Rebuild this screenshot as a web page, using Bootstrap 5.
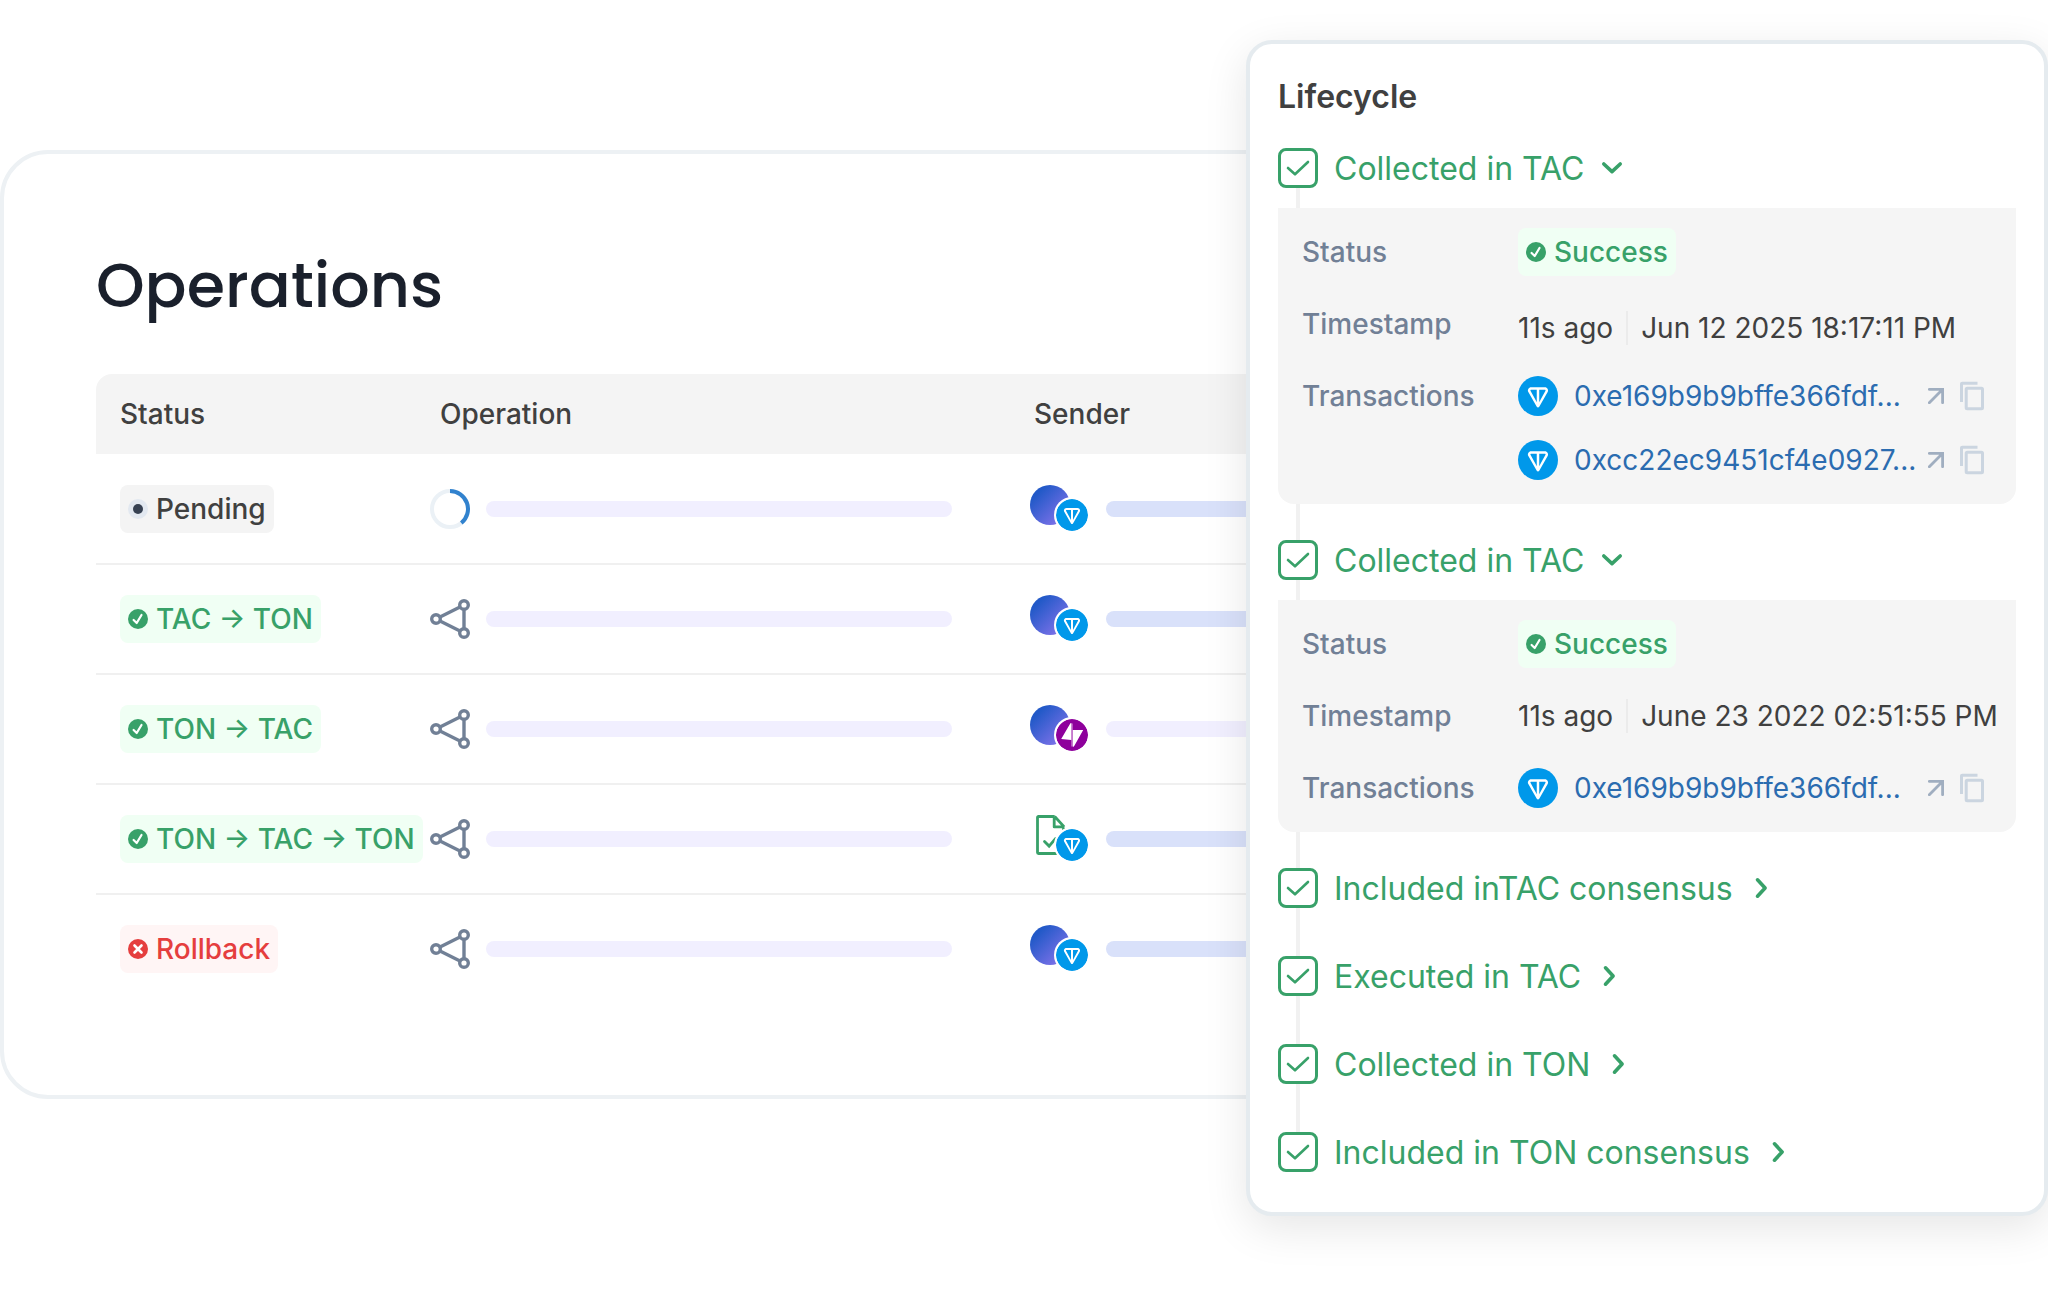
<!DOCTYPE html>
<html lang="en">
<head>
<meta charset="utf-8">
<meta name="viewport" content="width=device-width, initial-scale=1">
<title>Operations</title>
<link href="https://cdn.jsdelivr.net/npm/bootstrap@5.3.0/dist/css/bootstrap.min.css" rel="stylesheet">
<style>
  body { font-family: Inter, "Liberation Sans", sans-serif; font-size: 28px; line-height: 40px; color: #404040; background: #fff; }
  svg { display: block; flex: none; }

  .stage { padding: 40px 0 100px; }
  .ops-card { flex: 1 1 0; min-width: 0; margin-top: 110px; padding: 92px 0 90px 92px; border: 4px solid #edf1f4; border-radius: 48px; background: #fff; }
  .ops-title { font-family: Poppins, Inter, sans-serif; font-size: 62px; line-height: 80px; font-weight: 500; color: #1a202c; margin-bottom: 48px; }

  .ops-table { table-layout: fixed; --bs-table-bg: transparent; color: inherit; }
  .ops-table col.c-status { width: 334px; }
  .ops-table col.c-operation { width: 600px; }
  .ops-table > :not(caption) > * > * { padding: 0; vertical-align: middle; border-bottom: 2px solid #f0f0f0; }
  .ops-table > thead > tr > th { height: 80px; background: #f4f4f4; border: 0; font-weight: 500; }
  .ops-table > thead > tr > th:first-child { padding-left: 24px; border-top-left-radius: 16px; }
  .ops-table > thead > tr > th:nth-child(2) { padding-left: 10px; }
  .ops-table > thead > tr > th:nth-child(3) { padding-left: 4px; }
  .ops-table > tbody > tr > td { height: 110px; }
  .ops-table > tbody > tr > td:first-child { padding-left: 24px; }
  .ops-table > tbody > tr:last-child > td { border-bottom-color: transparent; }

  .tag { display: inline-flex; align-items: center; gap: 8px; height: 48px; padding: 0 8px; border-radius: 8px; font-weight: 500; white-space: nowrap; }
  .tag-ok { color: #38a169; background: #f0fff4; }
  .tag-wait { background: #f4f4f4; }
  .tag-bad { color: #e53e3e; background: #fff5f5; }

  .bar { height: 16px; border-radius: 8px; background: #f1efff; }
  .bar-op { width: 466px; }
  .bar-blue { background: #d9e1fa; }

  .sender { position: relative; flex: none; width: 60px; height: 48px; }
  .avatar { width: 40px; height: 40px; border-radius: 50%; background: linear-gradient(135deg, #2259c8 20%, #8d76ee 95%); }
  .chain { position: absolute; left: 26px; top: 14px; border-radius: 50%; box-shadow: 0 0 0 2px #fff; background: #fff; }

  .life { position: relative; flex: none; width: 802px; margin-left: -154px; padding: 32px 28px 40px; border: 4px solid #e5ebef; border-radius: 26px; background: #fff; box-shadow: 0 12px 44px rgba(0, 0, 0, .1); }
  .life-title { font-size: 32px; line-height: 42px; font-weight: 600; margin-bottom: 30px; }
  .step { position: relative; padding-bottom: 48px; }
  .step.open { padding-bottom: 36px; }
  .step:last-child { padding-bottom: 0; }
  .step:not(:last-child)::before { content: ""; position: absolute; left: 18px; top: 40px; bottom: 0; width: 4px; background: #f1f1f1; }
  .step-head { height: 40px; font-size: 32px; color: #38a169; }
  .step-head label { padding-top: 2px; }
  .step-check.form-check-input { width: 40px; height: 40px; margin: 0 16px 0 0; border: 3px solid #38a169; border-radius: 8px; flex: none; background-color: #fff; }
  .step-check.form-check-input:checked { border-color: #38a169; background-color: #fff; background-origin: border-box; background-size: 40px 40px; background-image: url("data:image/svg+xml,%3csvg xmlns='http://www.w3.org/2000/svg' viewBox='0 0 40 40'%3e%3cpath fill='none' stroke='%2338a169' stroke-width='2.6' stroke-linecap='round' stroke-linejoin='round' d='M10 20l7 6.3L30 14'/%3e%3c/svg%3e"); }
  .bare { border: 0; background: none; padding: 0; color: inherit; }
  .step-toggle { margin-left: 12px; }

  .facts { position: relative; margin: 20px 0 0; padding: 20px 20px 20px 24px; border-radius: 0 0 16px 16px; background: #f5f5f5; display: grid; grid-template-columns: 216px minmax(0, 1fr); row-gap: 24px; }
  .facts dt { font-weight: 500; color: #718096; line-height: 48px; }
  .facts dd { margin: 0; min-height: 48px; display: flex; align-items: center; white-space: nowrap; }
  .when { display: flex; align-items: center; gap: 13px; line-height: 34px; }
  .rule { width: 2px; height: 34px; background: #ebebeb; }
  .tx-list { flex: 1; min-width: 0; padding: 4px 12px 4px 0; display: grid; grid-template-columns: minmax(0, 1fr); row-gap: 24px; }
  .tx { height: 40px; display: flex; align-items: center; gap: 8px; }
  .tx a { color: #2b6cb0; text-decoration: none; flex: 1; min-width: 0; }
  .tx .arrow-link { flex: none; color: #a0aec0; }
  .tx button { color: #cbd5e0; }
</style>
</head>
<body>

<svg width="0" height="0" class="position-absolute" aria-hidden="true">
  <defs>
    <symbol id="i-ok" viewBox="0 0 20 20"><circle cx="10" cy="10" r="10" fill="#38a169"/><path d="M5.6 11l3.1 3 4.8-8" fill="none" stroke="#fff" stroke-width="2.2" stroke-linecap="round" stroke-linejoin="round"/></symbol>
    <symbol id="i-bad" viewBox="0 0 20 20"><circle cx="10" cy="10" r="10" fill="#e53e3e"/><path d="M6.5 6.5l7 7m0-7l-7 7" stroke="#fff" stroke-width="2.6" stroke-linecap="round"/></symbol>
    <symbol id="i-wait" viewBox="0 0 20 20"><circle cx="10" cy="10" r="10" fill="#e2e8f0"/><circle cx="10" cy="10" r="5" fill="#364152"/></symbol>
    <symbol id="i-spin" viewBox="0 0 40 40"><circle cx="20" cy="20" r="18" fill="none" stroke="#ebf1f6" stroke-width="4"/><path d="M20 2A18 18 0 0 1 31.3 34" fill="none" stroke="#3182ce" stroke-width="4"/></symbol>
    <symbol id="i-nodes" viewBox="0 0 40 40"><g fill="none" stroke="#718096" stroke-width="3.4"><path d="M10 18L30 8M10 22l20 10M34 10v20"/><circle cx="6" cy="20" r="4.3"/><circle cx="34" cy="6" r="4.3"/><circle cx="34" cy="34" r="4.3"/></g></symbol>
    <symbol id="i-ton" viewBox="0 0 56 56"><circle cx="28" cy="28" r="28" fill="#0098ea"/><path fill="#fff" d="M37.56 15.63H18.44c-3.52 0-5.75 3.79-3.98 6.86l11.8 20.45c.77 1.34 2.7 1.34 3.47 0l11.81-20.45c1.76-3.06-.46-6.86-3.98-6.86zM26.25 36.81l-2.57-4.98-6.2-11.09c-.41-.71.1-1.62.96-1.62h7.81zM38.51 20.74l-6.2 11.1-2.57 4.97V19.12h7.82c.85 0 1.36.91.95 1.62z"/></symbol>
    <symbol id="i-tac" viewBox="0 0 32 32"><circle cx="16" cy="16" r="16" fill="#8e009c"/><path d="M16 4.5v23" stroke="#c97fd0" stroke-width="1.4"/><path fill="#fff" d="M14.4 4.2l.9-.2v17L5.2 20zM16.8 11h10.4L17.8 27.8l-1-.3z"/></symbol>
    <symbol id="i-doc" viewBox="0 0 40 40"><g fill="none" stroke="#38a169" stroke-width="2.8"><path d="M24.7 1.5H8.5a1 1 0 0 0-1 1v35a1 1 0 0 0 1 1h24a1 1 0 0 0 1-1V12.4M24.2 1.5v10.4H34M24.7 1.5l9.5 10.4" stroke-linejoin="round"/><path d="M14.5 26.5l4.6 4.6 6.4-7.5" stroke-linecap="round"/></g></symbol>
    <symbol id="i-down" viewBox="0 0 32 32"><path d="M7.8 12l8.2 7.6 8.2-7.6" fill="none" stroke="#38a169" stroke-width="3.6" stroke-linecap="round" stroke-linejoin="round"/></symbol>
    <symbol id="i-right" viewBox="0 0 32 32"><path d="M12.5 7.8l7.6 8.2-7.6 8.2" fill="none" stroke="#38a169" stroke-width="3.6" stroke-linecap="round" stroke-linejoin="round"/></symbol>
    <symbol id="i-out" viewBox="0 0 16 16"><path d="M1.3 14.7L14.2 1.8M1.3 1.4h13.3v13.3" fill="none" stroke="currentColor" stroke-width="2.8" stroke-linecap="round" stroke-linejoin="miter"/></symbol>
    <symbol id="i-copy" viewBox="0 0 24 30"><g fill="none" stroke="currentColor" stroke-width="3"><rect x="6.2" y="7.2" width="16.3" height="20.6" rx="1"/><path d="M1.5 21V3a.8.8 0 0 1 .8-.8H17.5"/></g></symbol>
  </defs>
</svg>

<main class="stage d-flex align-items-start">

  <section class="ops-card">
    <h1 class="ops-title">Operations</h1>
    <table class="table ops-table mb-0">
      <colgroup><col class="c-status"><col class="c-operation"><col></colgroup>
      <thead>
        <tr><th scope="col">Status</th><th scope="col">Operation</th><th scope="col">Sender</th></tr>
      </thead>
      <tbody>
        <tr>
          <td><span class="tag tag-wait"><svg width="20" height="20"><use href="#i-wait"/></svg>Pending</span></td>
          <td><div class="d-flex align-items-center gap-3"><svg width="40" height="40"><use href="#i-spin"/></svg><div class="bar bar-op"></div></div></td>
          <td><div class="d-flex align-items-center gap-3"><div class="sender"><div class="avatar"></div><svg class="chain" width="32" height="32"><use href="#i-ton"/></svg></div><div class="bar bar-blue flex-grow-1"></div></div></td>
        </tr>
        <tr>
          <td><span class="tag tag-ok"><svg width="20" height="20"><use href="#i-ok"/></svg>TAC → TON</span></td>
          <td><div class="d-flex align-items-center gap-3"><svg width="40" height="40"><use href="#i-nodes"/></svg><div class="bar bar-op"></div></div></td>
          <td><div class="d-flex align-items-center gap-3"><div class="sender"><div class="avatar"></div><svg class="chain" width="32" height="32"><use href="#i-ton"/></svg></div><div class="bar bar-blue flex-grow-1"></div></div></td>
        </tr>
        <tr>
          <td><span class="tag tag-ok"><svg width="20" height="20"><use href="#i-ok"/></svg>TON → TAC</span></td>
          <td><div class="d-flex align-items-center gap-3"><svg width="40" height="40"><use href="#i-nodes"/></svg><div class="bar bar-op"></div></div></td>
          <td><div class="d-flex align-items-center gap-3"><div class="sender"><div class="avatar"></div><svg class="chain" width="32" height="32"><use href="#i-tac"/></svg></div><div class="bar flex-grow-1"></div></div></td>
        </tr>
        <tr>
          <td><span class="tag tag-ok"><svg width="20" height="20"><use href="#i-ok"/></svg>TON → TAC → TON</span></td>
          <td><div class="d-flex align-items-center gap-3"><svg width="40" height="40"><use href="#i-nodes"/></svg><div class="bar bar-op"></div></div></td>
          <td><div class="d-flex align-items-center gap-3"><div class="sender"><svg width="40" height="40"><use href="#i-doc"/></svg><svg class="chain" width="32" height="32"><use href="#i-ton"/></svg></div><div class="bar bar-blue flex-grow-1"></div></div></td>
        </tr>
        <tr>
          <td><span class="tag tag-bad"><svg width="20" height="20"><use href="#i-bad"/></svg>Rollback</span></td>
          <td><div class="d-flex align-items-center gap-3"><svg width="40" height="40"><use href="#i-nodes"/></svg><div class="bar bar-op"></div></div></td>
          <td><div class="d-flex align-items-center gap-3"><div class="sender"><div class="avatar"></div><svg class="chain" width="32" height="32"><use href="#i-ton"/></svg></div><div class="bar bar-blue flex-grow-1"></div></div></td>
        </tr>
      </tbody>
    </table>
  </section>

  <aside class="life">
    <h2 class="life-title">Lifecycle</h2>

    <div class="step open">
      <div class="step-head d-flex align-items-center">
        <input class="form-check-input step-check" type="checkbox" id="s1" checked>
        <label for="s1">Collected in TAC</label>
        <button type="button" class="bare step-toggle" aria-label="Collapse"><svg width="32" height="32"><use href="#i-down"/></svg></button>
      </div>
      <dl class="facts">
        <dt>Status</dt>
        <dd><span class="tag tag-ok"><svg width="20" height="20"><use href="#i-ok"/></svg>Success</span></dd>
        <dt>Timestamp</dt>
        <dd><div class="when mt-2"><span>11s ago</span><span class="rule"></span><span>Jun 12 2025 18:17:11 PM</span></div></dd>
        <dt>Transactions</dt>
        <dd>
          <div class="tx-list">
            <div class="tx"><svg class="me-2" width="40" height="40"><use href="#i-ton"/></svg><a href="#">0xe169b9b9bffe366fdf...</a><a href="#" class="arrow-link me-2" aria-label="Open"><svg width="16" height="16"><use href="#i-out"/></svg></a><button type="button" class="bare" aria-label="Copy"><svg width="24" height="30"><use href="#i-copy"/></svg></button></div>
            <div class="tx"><svg class="me-2" width="40" height="40"><use href="#i-ton"/></svg><a href="#">0xcc22ec9451cf4e0927...</a><a href="#" class="arrow-link me-2" aria-label="Open"><svg width="16" height="16"><use href="#i-out"/></svg></a><button type="button" class="bare" aria-label="Copy"><svg width="24" height="30"><use href="#i-copy"/></svg></button></div>
          </div>
        </dd>
      </dl>
    </div>

    <div class="step open">
      <div class="step-head d-flex align-items-center">
        <input class="form-check-input step-check" type="checkbox" id="s2" checked>
        <label for="s2">Collected in TAC</label>
        <button type="button" class="bare step-toggle" aria-label="Collapse"><svg width="32" height="32"><use href="#i-down"/></svg></button>
      </div>
      <dl class="facts">
        <dt>Status</dt>
        <dd><span class="tag tag-ok"><svg width="20" height="20"><use href="#i-ok"/></svg>Success</span></dd>
        <dt>Timestamp</dt>
        <dd><div class="when"><span>11s ago</span><span class="rule"></span><span>June 23 2022 02:51:55 PM</span></div></dd>
        <dt>Transactions</dt>
        <dd>
          <div class="tx-list">
            <div class="tx"><svg class="me-2" width="40" height="40"><use href="#i-ton"/></svg><a href="#">0xe169b9b9bffe366fdf...</a><a href="#" class="arrow-link me-2" aria-label="Open"><svg width="16" height="16"><use href="#i-out"/></svg></a><button type="button" class="bare" aria-label="Copy"><svg width="24" height="30"><use href="#i-copy"/></svg></button></div>
          </div>
        </dd>
      </dl>
    </div>

    <div class="step">
      <div class="step-head d-flex align-items-center">
        <input class="form-check-input step-check" type="checkbox" id="s3" checked>
        <label for="s3">Included inTAC consensus</label>
        <button type="button" class="bare step-toggle" aria-label="Expand"><svg width="32" height="32"><use href="#i-right"/></svg></button>
      </div>
    </div>
    <div class="step">
      <div class="step-head d-flex align-items-center">
        <input class="form-check-input step-check" type="checkbox" id="s4" checked>
        <label for="s4">Executed in TAC</label>
        <button type="button" class="bare step-toggle" aria-label="Expand"><svg width="32" height="32"><use href="#i-right"/></svg></button>
      </div>
    </div>
    <div class="step">
      <div class="step-head d-flex align-items-center">
        <input class="form-check-input step-check" type="checkbox" id="s5" checked>
        <label for="s5">Collected in TON</label>
        <button type="button" class="bare step-toggle" aria-label="Expand"><svg width="32" height="32"><use href="#i-right"/></svg></button>
      </div>
    </div>
    <div class="step">
      <div class="step-head d-flex align-items-center">
        <input class="form-check-input step-check" type="checkbox" id="s6" checked>
        <label for="s6">Included in TON consensus</label>
        <button type="button" class="bare step-toggle" aria-label="Expand"><svg width="32" height="32"><use href="#i-right"/></svg></button>
      </div>
    </div>
  </aside>

</main>

<script src="https://cdn.jsdelivr.net/npm/bootstrap@5.3.0/dist/js/bootstrap.bundle.min.js"></script>
</body>
</html>
